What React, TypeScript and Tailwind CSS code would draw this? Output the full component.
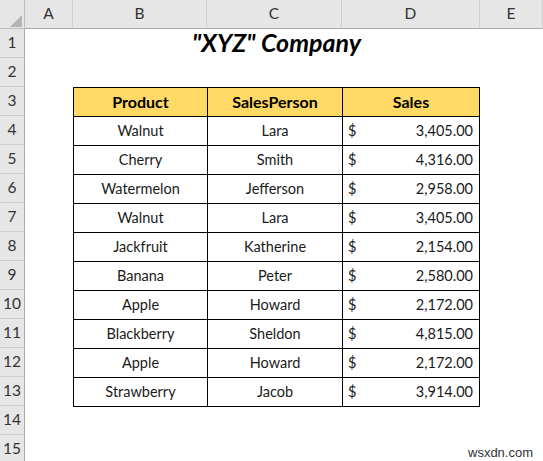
import React from "react";

const rows: [string, string, string][] = [
  ["Walnut", "Lara", "3,405.00"],
  ["Cherry", "Smith", "4,316.00"],
  ["Watermelon", "Jefferson", "2,958.00"],
  ["Walnut", "Lara", "3,405.00"],
  ["Jackfruit", "Katherine", "2,154.00"],
  ["Banana", "Peter", "2,580.00"],
  ["Apple", "Howard", "2,172.00"],
  ["Blackberry", "Sheldon", "4,815.00"],
  ["Apple", "Howard", "2,172.00"],
  ["Strawberry", "Jacob", "3,914.00"],
];

const font = { fontFamily: "Lato, 'Open Sans', sans-serif" };

export default function App() {
  const cols = ["A", "B", "C", "D", "E"];
  return (
    <div className="relative w-[543px] h-[461px] overflow-hidden bg-white text-[#1a1a1a]" style={font}>
      <div className="grid grid-cols-[25px_48px_134px_135px_138px_63px] grid-rows-[repeat(16,29px)]">
        {/* corner */}
        <div className="relative bg-[#e6e6e6] border-b border-r border-[#bdbdbd]">
          <svg className="absolute left-[10px] top-[15px]" width="12" height="12" viewBox="0 0 12 12">
            <polygon points="12,0 12,12 0,12" fill="#b4b4b4" />
          </svg>
        </div>
        {cols.map((c) => (
          <div
            key={c}
            className="bg-[#e6e6e6] border-b border-r border-b-[#a8a8a8] border-r-[#cfcfcf] flex items-center justify-center text-[15.5px] text-[#333]"
          >
            {c}
          </div>
        ))}
        {Array.from({ length: 15 }).map((_, i) => (
          <div
            key={i}
            className="bg-[#e6e6e6] border-b border-r border-b-[#cdcdcd] border-r-[#a8a8a8] flex items-center justify-center text-[15.5px] text-[#333]"
            style={{ gridRow: i + 2, gridColumn: 1 }}
          >
            {i + 1}
          </div>
        ))}
        {/* title */}
        <div className="col-start-3 col-end-6 row-start-2 flex items-end justify-center pb-[3px]">
          <span className="text-[25px] font-bold italic text-black leading-none">"XYZ" Company</span>
        </div>
        {/* table */}
        <div className="col-start-3 col-end-6 row-start-4 row-end-[15] self-start h-[320px] w-[407px] grid grid-cols-[133px_134px_136px] grid-rows-[repeat(11,28px)] gap-px p-px bg-black">
          {["Product", "SalesPerson", "Sales"].map((h) => (
            <div key={h} className="bg-[#ffd966] flex items-center justify-center font-bold text-[16px] text-black">
              {h}
            </div>
          ))}
          {rows.map((r, i) => (
            <React.Fragment key={i}>
              <div className="bg-white flex items-center justify-center text-[14.5px]">{r[0]}</div>
              <div className="bg-white flex items-center justify-center text-[14.5px]">{r[1]}</div>
              <div className="bg-white flex items-center justify-between pl-[5px] pr-[6px] text-[14.5px]">
                <span>$</span>
                <span>{r[2]}</span>
              </div>
            </React.Fragment>
          ))}
        </div>
      </div>
      <div
        className="absolute left-[468px] top-[443px] text-[13px] text-[#333]"
        style={{ fontFamily: "'Liberation Sans', Arial, sans-serif" }}
      >
        wsxdn.com
      </div>
    </div>
  );
}
